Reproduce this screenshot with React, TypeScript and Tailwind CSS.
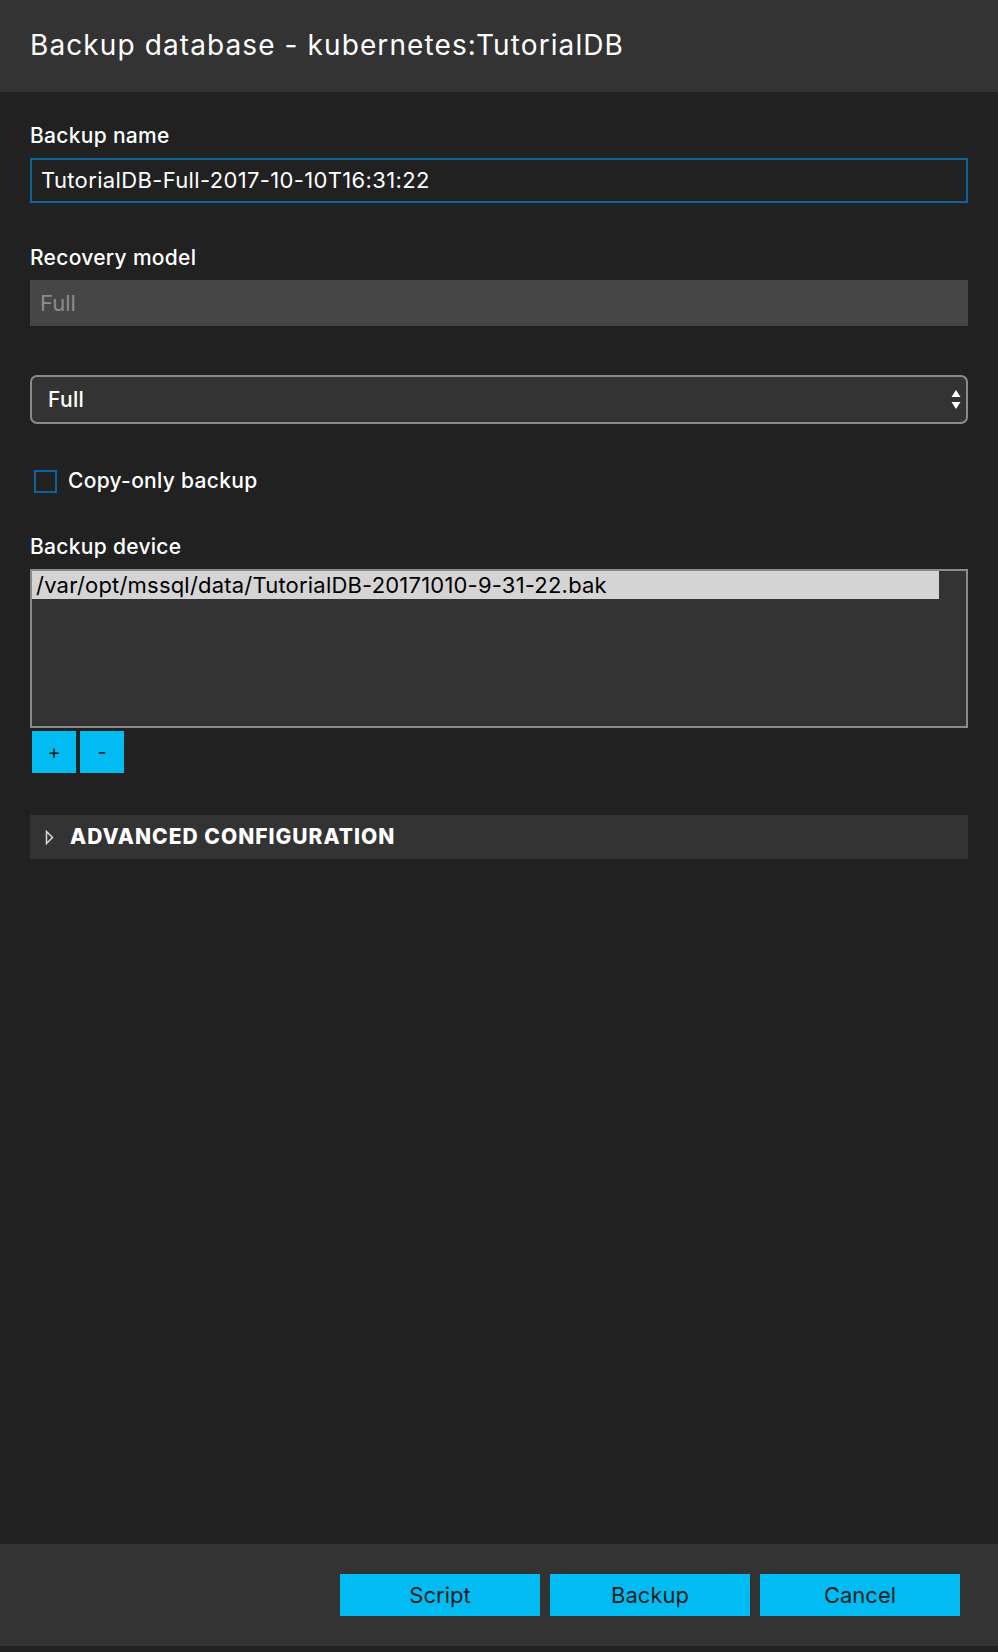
import { useState } from 'react';

const font = { fontFamily: 'Inter, "Noto Sans", sans-serif' };

function SelectArrows() {
  return (
    <svg width="10" height="19" viewBox="0 0 10 19" className="shrink-0">
      <polygon points="5,0 9.5,7 0.5,7" fill="#ffffff" />
      <polygon points="0.5,12 9.5,12 5,19" fill="#ffffff" />
    </svg>
  );
}

function Caret() {
  return (
    <svg width="9" height="15" viewBox="0 0 9 15" className="shrink-0">
      <polygon points="1.5,1.5 7.5,7.5 1.5,13.5" fill="none" stroke="#d8d8d8" strokeWidth="1.5" />
    </svg>
  );
}

export default function App() {
  const [name, setName] = useState('TutorialDB-Full-2017-10-10T16:31:22');
  const [copyOnly, setCopyOnly] = useState(false);

  return (
    <div className="flex h-[1652px] w-full flex-col bg-[#212121] text-white" style={font}>
      <header className="h-[92px] shrink-0 bg-[#333333] px-[30px] pt-[27px]">
        <h1 className="text-[28px] leading-[36px] font-normal tracking-[1.1px]">Backup database - kubernetes:TutorialDB</h1>
      </header>

      <main className="flex flex-1 flex-col px-[30px]">
        <label className="mt-[32px] text-[21px] leading-[24px] font-medium tracking-[0.3px]">Backup name</label>
        <div className="mt-[10px] flex h-[45px] items-center border-2 border-[#0e639c] pl-[9px]">
          <input
            value={name}
            onChange={(e) => setName(e.target.value)}
            className="w-full bg-transparent text-[22px] tracking-[0.35px] text-white outline-none"
            style={font}
          />
        </div>

        <label className="mt-[43px] text-[21px] leading-[24px] font-medium tracking-[0.3px]">Recovery model</label>
        <div className="mt-[10px] flex h-[46px] items-center bg-[#464646] pl-[10px] text-[22px] text-[#8c8c8c]">
          Full
        </div>

        <div className="mt-[49px] flex h-[49px] items-center justify-between rounded-[7px] border-2 border-[#8b8b8b] bg-[#333333] pr-[5px] pl-[16px]">
          <span className="text-[21px] font-medium tracking-[0.3px]">Full</span>
          <SelectArrows />
        </div>

        <label className="mt-[45px] flex cursor-pointer items-center gap-[11px] pl-[4px]">
          <span
            onClick={() => setCopyOnly(!copyOnly)}
            className="h-[23px] w-[23px] border-2 border-[#0e639c]"
          />
          <span className="text-[21px] leading-[24px] font-medium tracking-[0.3px]">Copy-only backup</span>
        </label>

        <label className="mt-[42px] text-[21px] leading-[24px] font-medium tracking-[0.3px]">Backup device</label>
        <div className="mt-[10px] h-[159px] border-2 border-[#8b8b8b] bg-[#333333] pr-[27px]">
          <div className="flex h-[28px] items-center bg-[#d4d4d4] pl-[4px] text-[22px] tracking-[0.2px] text-black">
            /var/opt/mssql/data/TutorialDB-20171010-9-31-22.bak
          </div>
        </div>
        <div className="mt-[3px] flex gap-[4px] pl-[2px]">
          <button className="h-[42px] w-[44px] bg-[#00bcf2] text-[20px] text-[#1e1e1e]">+</button>
          <button className="h-[42px] w-[44px] bg-[#00bcf2] text-[20px] text-[#1e1e1e]">-</button>
        </div>

        <div className="mt-[42px] flex h-[44px] items-center gap-[16px] bg-[#333333] pl-[15px]">
          <Caret />
          <span className="text-[21px] font-extrabold tracking-[1px] uppercase">Advanced configuration</span>
        </div>
      </main>

      <footer className="mb-[6px] flex h-[102px] shrink-0 items-center justify-end gap-[10px] bg-[#333333] pr-[38px]">
        <button className="h-[42px] w-[200px] bg-[#00bcf2] text-[22px] text-[#1e1e1e]">Script</button>
        <button className="h-[42px] w-[200px] bg-[#00bcf2] text-[22px] text-[#1e1e1e]">Backup</button>
        <button className="h-[42px] w-[200px] bg-[#00bcf2] text-[22px] text-[#1e1e1e]">Cancel</button>
      </footer>
    </div>
  );
}
